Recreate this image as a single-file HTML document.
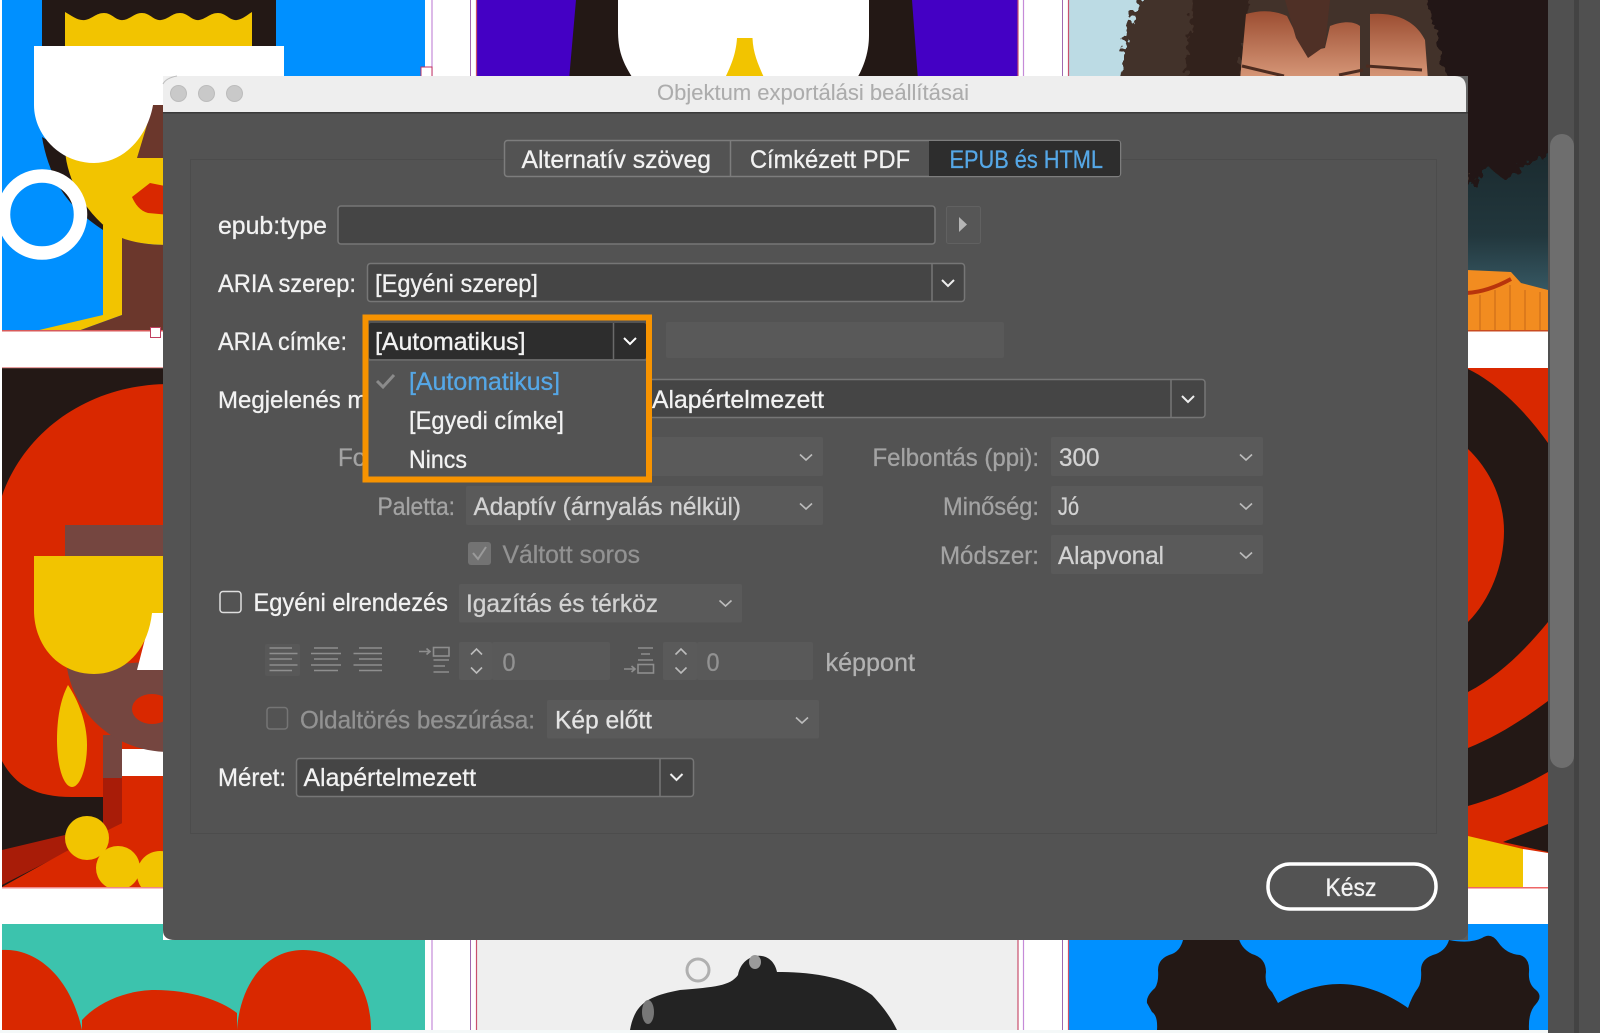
<!DOCTYPE html>
<html lang="hu"><head><meta charset="utf-8"><title>Objektum exportálási beállításai</title>
<style>
html,body{margin:0;padding:0;background:#fff;width:1600px;height:1033px;overflow:hidden}
svg{display:block}
text{font-family:"Liberation Sans",sans-serif;font-size:25px;color:#f2f2f2;fill:currentColor;stroke:currentColor;stroke-width:.3px}
.d{color:#a3a3a3}.e{color:#d2d2d2}.f{color:#929292}.b{color:#55a7e6}
.s{fill:#454545;stroke:#767676;stroke-width:1.5}
.x{fill:#5a5a5a}
.c{fill:none;stroke:#eee;stroke-width:2}
.g{fill:none;stroke:#bcbcbc;stroke-width:1.6}
.i{fill:none;stroke:#8e8e8e;stroke-width:1.6}
</style></head><body>
<svg width="1600" height="1033" viewBox="0 0 1600 1033" xmlns="http://www.w3.org/2000/svg">
<defs>
<linearGradient id="tl" x1="0" y1="0" x2="0" y2="1"><stop offset="0" stop-color="#18262a"/><stop offset=".55" stop-color="#22373d"/><stop offset="1" stop-color="#45707f"/></linearGradient>
<linearGradient id="sk" x1="0" y1="0" x2="0" y2="1"><stop offset="0" stop-color="#9c4e32"/><stop offset="1" stop-color="#d8997a"/></linearGradient>
<filter id="hr" x="-5%" y="-5%" width="110%" height="110%"><feTurbulence type="fractalNoise" baseFrequency=".12" numOctaves="2" seed="4" result="n"/><feDisplacementMap in="SourceGraphic" in2="n" scale="18"/></filter>
<clipPath id="c1"><rect x="2" y="0" width="423" height="331"/></clipPath>
<clipPath id="c2"><rect x="2" y="368" width="423" height="519"/></clipPath>
<clipPath id="c3"><rect x="2" y="924" width="423" height="106"/></clipPath>
<clipPath id="c4"><rect x="1069" y="924" width="479" height="106"/></clipPath>
<clipPath id="c5"><rect x="1069" y="0" width="479" height="331"/></clipPath>
</defs>
<rect width="1600" height="1033" fill="#fff"/>

<!-- cell 1 -->
<g clip-path="url(#c1)">
<rect x="2" y="0" width="423" height="331" fill="#0090ff"/>
<rect x="42" y="0" width="234" height="50" fill="#231815"/>
<path d="M65 12 C72 16 78 21 85 20 C92 19 96 13 104 13 C112 13 116 21 123 20 C131 19 134 13 142 13 C150 13 154 21 161 20 C169 19 172 13 180 13 C188 13 192 21 199 20 C206 19 210 13 218 13 C226 13 230 21 237 20 C243 19 247 15 252 12 V50 H65 Z" fill="#f2c400"/>
<path d="M42 137 L65 150 L120 238 L103 230 C85 218 70 205 60 188 C50 170 45 155 42 137 Z" fill="#231815"/>
<path d="M65 150 C67 180 85 215 120 238 C135 243 150 245 170 245 V100 H65 Z" fill="#f2c400"/>
<path d="M103 225 H122 V315 L78 331 H35 L103 315 Z" fill="#f2c400"/>
<path d="M122 238 C135 243 150 245 170 245 V331 H78 L122 315 Z" fill="#6b372c"/>
<path d="M153 105 L137 158 H170 V105 Z" fill="#6b372c"/>
<path d="M132 197 L150 183 L170 187 V215 L148 213 C140 211 135 204 132 197 Z" fill="#d92800"/>
<path d="M34 46 H284 V105 H153 C148 135 125 163 94 163 C60 163 34 135 34 105 Z" fill="#fff"/>
<circle cx="42" cy="214.500" r="38.500" fill="none" stroke="#fff" stroke-width="13.500"/>
</g>
<rect x="2" y="330" width="423" height="1.500" fill="#d75a5a"/>

<!-- cell 2 top -->
<rect x="477" y="0" width="541" height="80" fill="#4400c4"/>
<path d="M576 0 H912 L918 80 H569 Z" fill="#231815"/>
<path d="M618 0 H869 V35 C869 55 862 70 856 80 H634 C622 62 618 50 618 30 Z" fill="#fff"/>
<path d="M737 38 H752.500 C753 55 760 68 765 80 H724 C730 68 736 55 737 38 Z" fill="#f2c400"/>

<!-- cell 3 top -->
<g clip-path="url(#c5)">
<rect x="1069" y="0" width="479" height="331" fill="#bcdbe4"/>
<rect x="1300" y="120" width="248" height="211" fill="url(#tl)"/>
<g filter="url(#hr)">
<path d="M1146 -10 C1132 20 1118 50 1122 90 H1440 L1470 190 L1490 165 L1505 180 L1525 160 L1560 150 V-10 Z" fill="#43302a"/>
<path d="M1425 -10 H1560 V150 L1525 165 L1505 180 L1490 168 L1470 190 L1450 100 Z" fill="#221613"/>
<path d="M1195 -10 H1250 L1240 80 H1185 Z" fill="#33211b"/>
</g>
<path d="M1246 14 C1260 10 1274 10 1287 16 L1305 52 L1325 48 L1330 26 C1345 20 1355 22 1360 26 V80 H1240 Z" fill="url(#sk)"/>
<path d="M1370 14 C1395 12 1415 20 1425 40 L1428 80 H1370 Z" fill="url(#sk)"/>
<path d="M1285 0 H1330 L1325 46 L1308 58 L1296 38 Z" fill="#4f3026"/>
<path d="M1242 66 L1284 76 M1339 75 L1363 70 M1366 66 L1422 70" stroke="#4d2c20" stroke-width="3" fill="none"/>
<path d="M1467 270 L1511 272 L1521 283 L1548 290 V331 H1467 Z" fill="#f28c20"/>
<path d="M1467 293 C1485 292 1500 285 1511 279" stroke="#b8340c" stroke-width="4" fill="none"/>
<path d="M1480 295 V331 M1495 290 V331 M1510 285 V331 M1525 290 V331 M1540 292 V331" stroke="#dc7a1c" stroke-width="2" fill="none"/>
</g>
<rect x="1069" y="330" width="479" height="1.500" fill="#c94b20"/>

<!-- cell row 2 -->
<g clip-path="url(#c2)">
<rect x="2" y="368" width="423" height="519" fill="#231815"/>
<path d="M2 496 C25 430 90 384 170 384 V890 H122 V797 H72 C35 797 15 785 2 761 Z" fill="#d92800"/>
<path d="M2 850 L65 835 L103 825 V777 H122 V823 L100 835 L2 885 Z" fill="#a81c08"/>
<path d="M2 887 L65 852 L122 823 V777 H170 V887 Z" fill="#d92800"/>
<rect x="65" y="525" width="105" height="35" fill="#754640"/>
<rect x="103" y="735" width="19" height="43" fill="#754640"/>
<rect x="122" y="749" width="48" height="27" fill="#fff"/>
<path d="M67 668 C75 715 115 752 170 752 V660 Z" fill="#754640"/>
<path d="M152 612 H170 V670 H137 Z" fill="#fff"/>
<ellipse cx="152" cy="709" rx="20" ry="15" fill="#d92800"/>
<path d="M34 556 H170 V613 H152 C148 650 125 674 94 674 C58 674 34 645 34 610 Z" fill="#f2c400"/>
<path d="M68 685 C60 700 57 720 57 740 C57 768 64 787 72 787 C80 787 87 768 87 745 C87 722 78 700 68 685 Z" fill="#f2c400"/>
<circle cx="87" cy="838" r="22" fill="#f2c400"/>
<circle cx="118" cy="868" r="22" fill="#f2c400"/>
<circle cx="160" cy="874" r="23" fill="#f2c400"/>
</g>
<rect x="2" y="367" width="423" height="1.200" fill="#e8a0a0"/>
<rect x="2" y="887" width="423" height="1.500" fill="#e88"/>

<!-- right cell row 2 -->
<rect x="1468" y="368" width="80" height="520" fill="#d92800"/>
<path d="M1468 369 C1495 382 1525 410 1548 443 V622 C1525 650 1500 675 1468 692 Z" fill="#231815"/>
<path d="M1468 449 C1490 470 1504 500 1504 531 C1504 565 1490 600 1468 622 Z" fill="#d92800"/>
<path d="M1468 748 C1500 735 1525 718 1548 701 V772 C1525 785 1500 797 1468 806 Z" fill="#231815"/>
<path d="M1503 842 L1548 824 V852 Z" fill="#231815"/>
<path d="M1468 836 L1523 849 V888 H1468 Z" fill="#f2c400"/>
<path d="M1523 849 L1548 853 V888 H1523 Z" fill="#fff"/>
<rect x="1468" y="887" width="80" height="1.500" fill="#e66"/>

<!-- row 3 -->
<g clip-path="url(#c3)">
<rect x="2" y="924" width="423" height="106" fill="#3cc3ad"/>
<path d="M2 950 C35 948 70 975 82 1030 H237 C240 985 265 950 303 950 C345 950 371 985 371 1030 H2 Z" fill="#d92800"/>
<path d="M82 1020 C100 1000 130 990 155 990 C190 990 220 1000 237 1013 V1030 H82 Z" fill="#d92800"/>
</g>
<rect x="477" y="924" width="541" height="106" fill="#efefef"/>
<path d="M630 1030 C635 1002 650 996 680 990 C715 987 730 986 738 975 C742 952 772 948 777 972 C805 972 845 975 872 995 C886 1010 892 1020 897 1030 Z" fill="#232323"/>
<circle cx="698" cy="970" r="11" fill="none" stroke="#b0b0b0" stroke-width="3"/>
<ellipse cx="755" cy="962" rx="6" ry="7" fill="#9a9a9a"/>
<ellipse cx="648" cy="1012" rx="6" ry="12" fill="#777"/>
<g clip-path="url(#c4)">
<rect x="1069" y="924" width="479" height="106" fill="#0090ff"/>
<path d="M1147 1003 Q1146 996 1155 988 Q1159 982 1158 970 Q1158 958 1172 954 Q1182 950 1184 935 H1238 Q1240 948 1252 954 Q1266 958 1266 972 Q1264 985 1272 992 L1278 1003 C1300 990 1320 984 1340 984 C1365 984 1390 995 1408 1008 Q1412 996 1418 988 Q1422 982 1421 970 Q1421 958 1436 954 Q1446 950 1449 940 Q1470 944 1482 938 Q1491 932 1498 942 Q1506 954 1520 955 Q1530 958 1529 972 Q1528 984 1536 990 Q1543 996 1536 1004 Q1528 1012 1529 1030 H1157 Q1158 1016 1152 1012 Z" fill="#231815"/>
</g>

<!-- guide lines -->
<path d="M432 0 V1030 M1023.500 0 V1030" stroke="#c58bd8" stroke-width="1.200" fill="none"/>
<path d="M470.500 0 V1030 M1062.500 0 V1030" stroke="#a06ab0" stroke-width="1" fill="none"/>
<path d="M476.500 0 V1030 M1018 0 V1030 M1068.500 0 V1030" stroke="#c9506e" stroke-width="1.200" fill="none"/>
<rect x="421" y="67" width="11" height="10" fill="#fff" stroke="#c03060"/>
<rect x="150.500" y="327.500" width="10" height="10" fill="#fff" stroke="#c04060"/>

<!-- right panel -->
<rect x="1548" y="0" width="52" height="1033" fill="#505050"/>
<rect x="1574" y="0" width="5" height="1033" fill="#434343"/>
<rect x="1550" y="134" width="24" height="634" rx="12" fill="#6e6e6e"/>
<rect x="0" y="1030" width="1548" height="3" fill="#f4f8f8"/>

<!-- dialog -->
<rect x="163" y="76" width="20" height="20" fill="#f2f2f2"/>
<rect x="163" y="925" width="20" height="15" fill="#fff"/>
<rect x="1440" y="76" width="28" height="40" fill="#666"/>
<rect x="1440" y="900" width="28" height="40" fill="#5c5c5c"/>
<path d="M173 76 H1455 Q1466 76 1466 88 V112 H163 V86 Q163 76 173 76 Z" fill="#eeeeee"/>
<path d="M163 84 Q166 78 177 76" fill="none" stroke="#bdbdbd"/>
<path d="M163 112 H1468 V930 Q1468 940 1456 940 H175 Q163 940 163 930 Z" fill="#535353"/>
<rect x="163" y="112" width="1305" height="1.500" fill="#3a3a3a"/>
<circle cx="178.500" cy="93.500" r="8" fill="#c9c9c9" stroke="#bcbcbc"/>
<circle cx="206.500" cy="93.500" r="8" fill="#c9c9c9" stroke="#bcbcbc"/>
<circle cx="234.500" cy="93.500" r="8" fill="#c9c9c9" stroke="#bcbcbc"/>
<text x="657" y="100" style="font-size:22px;color:#acacac;stroke-width:.1px" textLength="312" lengthAdjust="spacingAndGlyphs">Objektum exportálási beállításai</text>

<!-- group -->
<rect x="190.500" y="159.500" width="1246" height="674" fill="none" stroke="#4c4c4c"/>

<!-- tabs -->
<rect x="504.500" y="140.500" width="616" height="36" rx="3" fill="#535353" stroke="#7d7d7d" stroke-width="1.500"/>
<path d="M730.500 141 V176" stroke="#7d7d7d" stroke-width="1.500"/>
<path d="M929 141 H1118 Q1120 141 1120 143 V174 Q1120 176 1118 176 H929 Z" fill="#2d2d2d"/>
<text x="521.500" y="168" textLength="189.500" lengthAdjust="spacingAndGlyphs">Alternatív szöveg</text>
<text x="750" y="168" textLength="160" lengthAdjust="spacingAndGlyphs">Címkézett PDF</text>
<text x="949.500" y="168" class="b" textLength="153.500" lengthAdjust="spacingAndGlyphs">EPUB és HTML</text>

<!-- epub:type -->
<text x="218" y="234" textLength="109" lengthAdjust="spacingAndGlyphs">epub:type</text>
<rect class="s" x="338" y="206" width="597" height="38" rx="3"/>
<rect x="946.500" y="206.500" width="34" height="37" rx="2" fill="#565656" stroke="#616161"/>
<path d="M959 217 L967 224.500 L959 232 Z" fill="#b5b5b5"/>

<!-- ARIA szerep -->
<text x="218" y="292" textLength="138" lengthAdjust="spacingAndGlyphs">ARIA szerep:</text>
<rect class="s" x="367.500" y="263.500" width="597" height="38" rx="3"/>
<path d="M932 264 V301" stroke="#767676" stroke-width="1.500"/>
<path class="c" d="M942 280 L948 286 L954 280"/>
<text x="375" y="292" textLength="163" lengthAdjust="spacingAndGlyphs">[Egyéni szerep]</text>

<!-- ARIA címke label & disabled field -->
<text x="218" y="350" textLength="129" lengthAdjust="spacingAndGlyphs">ARIA címke:</text>
<rect x="666" y="322" width="338" height="36" rx="2" fill="#595959"/>

<!-- Megjelenés -->
<text x="218" y="408" style="font-size:24px">Megjelenés módja:</text>
<rect class="s" x="600" y="379.500" width="605" height="38" rx="3"/>
<path d="M1171 380 V417" stroke="#767676" stroke-width="1.500"/>
<path class="c" d="M1182 396 L1188 402 L1194 396"/>
<text x="652" y="408" textLength="172" lengthAdjust="spacingAndGlyphs">Alapértelmezett</text>

<!-- Disabled rows -->
<text x="338" y="466" class="d" textLength="117" lengthAdjust="spacingAndGlyphs">Formátum:</text>
<rect class="x" x="466" y="437" width="357" height="39" rx="2"/>
<path class="g" d="M800 454.500 L806 460 L812 454.500"/>
<text x="377.500" y="515" class="d" textLength="77.500" lengthAdjust="spacingAndGlyphs">Paletta:</text>
<rect class="x" x="466" y="486" width="357" height="39" rx="2"/>
<text x="473.500" y="515" class="e" textLength="267.500" lengthAdjust="spacingAndGlyphs">Adaptív (árnyalás nélkül)</text>
<path class="g" d="M800 503.500 L806 509 L812 503.500"/>

<text x="872.500" y="466" class="d" textLength="166.500" lengthAdjust="spacingAndGlyphs">Felbontás (ppi):</text>
<rect class="x" x="1051" y="437" width="212" height="39" rx="2"/>
<text x="1059" y="466" class="e" textLength="40.500" lengthAdjust="spacingAndGlyphs">300</text>
<path class="g" d="M1240 454.500 L1246 460 L1252 454.500"/>
<text x="943" y="515" class="d" textLength="96" lengthAdjust="spacingAndGlyphs">Minőség:</text>
<rect class="x" x="1051" y="486" width="212" height="39" rx="2"/>
<text x="1058" y="515" class="e" textLength="21" lengthAdjust="spacingAndGlyphs">Jó</text>
<path class="g" d="M1240 503.500 L1246 509 L1252 503.500"/>
<text x="940" y="564" class="d" textLength="99" lengthAdjust="spacingAndGlyphs">Módszer:</text>
<rect class="x" x="1051" y="535" width="212" height="39" rx="2"/>
<text x="1058" y="564" class="e" textLength="106" lengthAdjust="spacingAndGlyphs">Alapvonal</text>
<path class="g" d="M1240 552.500 L1246 558 L1252 552.500"/>

<rect x="468" y="542" width="23" height="23" rx="3" fill="#737373"/>
<path d="M473 553 L478 559 L486 547" fill="none" stroke="#9a9a9a" stroke-width="2"/>
<text x="502.500" y="563" class="f" textLength="137.500" lengthAdjust="spacingAndGlyphs">Váltott soros</text>

<!-- Egyéni elrendezés -->
<rect x="220" y="591.500" width="21" height="21" rx="3" fill="none" stroke="#dedede" stroke-width="1.500"/>
<text x="253.500" y="611" textLength="194.500" lengthAdjust="spacingAndGlyphs">Egyéni elrendezés</text>
<rect class="x" x="459" y="584" width="283" height="38.500" rx="2"/>
<text x="466" y="612" class="e" textLength="192" lengthAdjust="spacingAndGlyphs">Igazítás és térköz</text>
<path class="g" d="M719.500 600.500 L725.500 606 L731.500 600.500"/>

<!-- alignment icons -->
<rect x="265" y="644" width="35" height="32" rx="2" fill="#585858"/>
<path class="i" d="M269.500 648 H292 M269.500 653.500 H297.500 M269.500 659 H292 M269.500 665 H297.500 M269.500 670.500 H292"/>
<path class="i" d="M314 648 H338 M311 653.500 H341 M314 659 H338 M311 665 H341 M314 670.500 H338"/>
<path class="i" d="M359 648 H382 M353.500 653.500 H382 M359 659 H382 M353.500 665 H382 M359 670.500 H382"/>
<path class="i" d="M419 651.500 H430 M426.500 648.500 L430 651.500 L426.500 654.500 M433.500 660 H449 M433.500 666 H445 M433.500 672 H449"/>
<rect class="i" x="433.500" y="647.500" width="15.500" height="8.500"/>
<rect class="x" x="459" y="642" width="33" height="38" rx="2"/>
<rect x="492" y="642" width="118" height="38" rx="2" fill="#595959"/>
<path class="g" d="M471 654.500 L476.500 649 L482 654.500 M471 667.500 L476.500 673 L482 667.500"/>
<text x="502.500" y="671" class="f" textLength="13" lengthAdjust="spacingAndGlyphs">0</text>
<path class="i" d="M638 648 H653 M641 654 H650 M638 660 H653 M624 669 H635 M631.500 666 L635 669 L631.500 672"/>
<rect class="i" x="638" y="664.500" width="15.500" height="8.500"/>
<rect class="x" x="663" y="642" width="34" height="38" rx="2"/>
<rect x="697" y="642" width="116" height="38" rx="2" fill="#595959"/>
<path class="g" d="M675.500 654.500 L681 649 L686.500 654.500 M675.500 667.500 L681 673 L686.500 667.500"/>
<text x="706.500" y="671" class="f" textLength="13" lengthAdjust="spacingAndGlyphs">0</text>
<text x="825.500" y="671" style="color:#b2b2b2" textLength="89.500" lengthAdjust="spacingAndGlyphs">képpont</text>

<!-- Oldaltörés -->
<rect x="267" y="707.500" width="20.500" height="21.500" rx="3" fill="none" stroke="#757575" stroke-width="1.500"/>
<text x="300" y="728.500" class="f" textLength="235" lengthAdjust="spacingAndGlyphs">Oldaltörés beszúrása:</text>
<rect class="x" x="547" y="700" width="272" height="38.500" rx="2"/>
<text x="555" y="728.500" style="color:#e4e4e4" textLength="97" lengthAdjust="spacingAndGlyphs">Kép előtt</text>
<path class="g" d="M796 717.500 L802 723 L808 717.500"/>

<!-- Méret -->
<text x="218" y="786" textLength="68" lengthAdjust="spacingAndGlyphs">Méret:</text>
<rect class="s" x="296.500" y="758.500" width="397" height="38" rx="3"/>
<path d="M660 759 V796" stroke="#767676" stroke-width="1.500"/>
<path class="c" d="M670.500 774 L676.500 780 L682.500 774"/>
<text x="303.500" y="786" textLength="172.500" lengthAdjust="spacingAndGlyphs">Alapértelmezett</text>

<!-- Kész -->
<rect x="1268" y="864" width="168" height="45" rx="22" fill="#535353" stroke="#fff" stroke-width="3.500"/>
<text x="1325.500" y="896" textLength="51" lengthAdjust="spacingAndGlyphs">Kész</text>

<!-- dropdown -->
<rect x="365.500" y="317.500" width="283.500" height="162" fill="#535353" stroke="#f79300" stroke-width="6"/>
<rect x="369" y="323" width="277" height="36" rx="2" fill="#2d2d2d"/>
<path d="M613.500 323 V359" stroke="#6a6a6a" stroke-width="1.500"/>
<path class="c" d="M624 338 L630 344 L636 338" style="stroke:#fff"/>
<rect x="369" y="359" width="277" height="2" fill="#666"/>
<text x="375" y="350" textLength="150.500" lengthAdjust="spacingAndGlyphs">[Automatikus]</text>
<path d="M377 381 L383 387 L394 375" fill="none" stroke="#8b8b8b" stroke-width="3"/>
<text x="409" y="390" class="b" textLength="151" lengthAdjust="spacingAndGlyphs">[Automatikus]</text>
<text x="409" y="429" textLength="155" lengthAdjust="spacingAndGlyphs">[Egyedi címke]</text>
<text x="409" y="468" textLength="58" lengthAdjust="spacingAndGlyphs">Nincs</text>
</svg>
</body></html>
